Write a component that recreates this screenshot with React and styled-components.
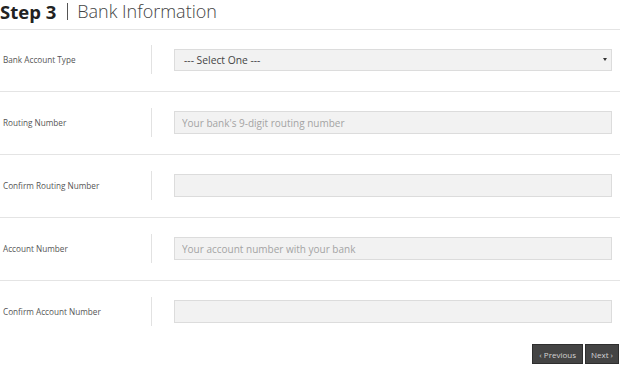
import React from 'react'
import styled, { createGlobalStyle } from 'styled-components'

const GlobalStyle = createGlobalStyle`
    body {
        margin: 0;
        background: #fff;
        font-family: "Open Sans", "Liberation Sans", sans-serif;
    }
`

const Page = styled.div`
    width: 620px;
`

const Header = styled.h2`
    display: flex;
    align-items: flex-start;
    height: 28px;
    margin: 0;
    padding-top: 1px;
    border-bottom: 1px solid #e4e4e4;
    box-sizing: content-box;
    color: #222;
    font-size: 18.5px;
    line-height: 21px;
`

const StepNo = styled.span`
    font-weight: 700;
`

const Bar = styled.span`
    width: 1px;
    height: 17px;
    margin: 2px 9px 0 11px;
    background: #555;
`

const Title = styled.span`
    font-weight: 300;
    font-size: 18px;
    color: #444;
`

const Row = styled.div`
    display: grid;
    grid-template-columns: 151px 1fr;
    align-items: center;
    padding: ${p => (p.$first ? '15px' : '16px')} 0 17px;
    border-bottom: ${p => (p.$last ? 'none' : '1px solid #e4e4e4')};
`

const Label = styled.label`
    padding-left: 3px;
    font-size: 8.2px;
    color: #555;
`

const Field = styled.div`
    display: flex;
    align-items: center;
    height: 29px;
    padding: 0 8px 0 22px;
    border-left: 1px solid #e2e2e2;
`

const Input = styled.input`
    box-sizing: border-box;
    width: 100%;
    height: 23px;
    margin: 0;
    padding: 0 7px;
    background: #f2f2f2;
    border: 1px solid #dcdcdc;
    border-radius: 0;
    font-family: inherit;
    font-size: 10px;
    color: #555;
    outline: none;

    &::placeholder {
        color: #a4a4a4;
    }
`

const Select = styled.div`
    box-sizing: border-box;
    display: flex;
    align-items: center;
    justify-content: space-between;
    width: 100%;
    height: 22px;
    padding: 0 4px 0 9px;
    background: #f2f2f2;
    border: 1px solid #dcdcdc;
    font-size: 10.3px;
    color: #444;
`

const Arrow = styled.span`
    width: 0;
    height: 0;
    border-left: 2px solid transparent;
    border-right: 2px solid transparent;
    border-top: 3px solid #333;
`

const Footer = styled.div`
    display: flex;
    justify-content: flex-end;
    gap: 2px;
    padding: 1px 1px 0 0;
`

const Button = styled.button`
    height: 20px;
    padding: 0 ${p => p.$pad}px;
    background: #444;
    border: 1px solid #2e2e2e;
    border-radius: 0;
    color: #d4d4d4;
    font-family: inherit;
    font-size: 8px;
    cursor: pointer;
`

const fields = [
    { label: 'Routing Number', placeholder: "Your bank's 9-digit routing number" },
    { label: 'Confirm Routing Number', placeholder: '' },
    { label: 'Account Number', placeholder: 'Your account number with your bank' },
    { label: 'Confirm Account Number', placeholder: '' },
]

const App = () => {
    return (
        <Page>
            <GlobalStyle />
            <Header>
                <StepNo>Step 3</StepNo>
                <Bar />
                <Title>Bank Information</Title>
            </Header>
            <Row $first>
                <Label>Bank Account Type</Label>
                <Field>
                    <Select>
                        <span>--- Select One ---</span>
                        <Arrow />
                    </Select>
                </Field>
            </Row>
            {fields.map((f, i) => (
                <Row key={f.label} $last={i === fields.length - 1}>
                    <Label>{f.label}</Label>
                    <Field>
                        <Input placeholder={f.placeholder} />
                    </Field>
                </Row>
            ))}
            <Footer>
                <Button $pad={6}>‹ Previous</Button>
                <Button $pad={5}>Next ›</Button>
            </Footer>
        </Page>
    )
}

export default App
